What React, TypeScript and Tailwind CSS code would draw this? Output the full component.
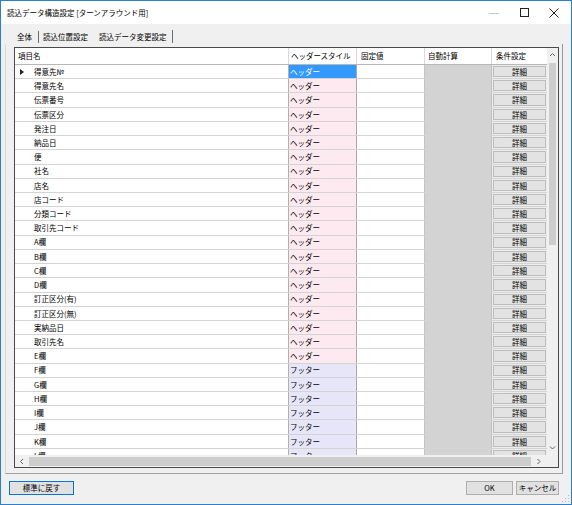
import React from "react";

const ROWS = [
  "得意先№",
  "得意先名",
  "伝票番号",
  "伝票区分",
  "発注日",
  "納品日",
  "便",
  "社名",
  "店名",
  "店コード",
  "分類コード",
  "取引先コード",
  "A欄",
  "B欄",
  "C欄",
  "D欄",
  "訂正区分(有)",
  "訂正区分(無)",
  "実納品日",
  "取引先名",
  "E欄",
  "F欄",
  "G欄",
  "H欄",
  "I欄",
  "J欄",
  "K欄",
  "L欄",
];

// rows from F欄 onwards are footer rows
const FOOTER_FROM = 21;

function Chevron({ dir }: { dir: "up" | "down" | "left" | "right" }) {
  const d = {
    up: "M1 4 L3.5 1.5 L6 4",
    down: "M1 1.5 L3.5 4 L6 1.5",
    left: "M4 1 L1.5 3.5 L4 6",
    right: "M1.5 1 L4 3.5 L1.5 6",
  }[dir];
  const w = dir === "up" || dir === "down" ? 7 : 5.5;
  const h = dir === "up" || dir === "down" ? 5.5 : 7;
  return (
    <svg width={w} height={h} viewBox={`0 0 ${w} ${h}`} className="block">
      <path d={d} fill="none" stroke="#606060" strokeWidth="1" />
    </svg>
  );
}

function TitleBar() {
  return (
    <div className="h-[23px] bg-white flex items-center shrink-0">
      <span className="pl-[6px] text-black">読込データ構造設定 [ターンアラウンド用]</span>
      <div className="ml-auto flex h-full pr-[2px]">
        <div className="w-[30px] h-full flex items-center justify-center">
          <div className="w-[10px] h-px bg-[#c8c8c8] mt-[1px]" />
        </div>
        <div className="w-[30px] h-full flex items-center justify-center">
          <div className="w-[9px] h-[9px] border border-[#222]" />
        </div>
        <div className="w-[30px] h-full flex items-center justify-center">
          <svg width="10" height="10" viewBox="0 0 10 10">
            <path d="M0.5 0.5 L9.5 9.5 M9.5 0.5 L0.5 9.5" stroke="#222" strokeWidth="1" />
          </svg>
        </div>
      </div>
    </div>
  );
}

function Tabs() {
  return (
    <div className="h-[20px] flex items-center pt-[5px] shrink-0">
      <div className="w-[37px] pl-[16px]">全体</div>
      <div className="w-px h-[12px] bg-[#6e6e6e]" />
      <div className="w-[60px] pl-[4px]">読込位置設定</div>
      <div className="w-[73px]">読込データ変更設定</div>
      <div className="w-px h-[13px] bg-[#6e6e6e]" />
    </div>
  );
}

function HeaderRow() {
  return (
    <div className="h-[17px] flex border-b border-[#b8b8b8] bg-white shrink-0">
      <div className="w-[274px] pl-[3px] flex items-center border-r border-[#d8d8d8]">項目名</div>
      <div className="w-[68px] pl-[2px] flex items-center border-r border-[#d8d8d8]">ヘッダースタイル</div>
      <div className="w-[68px] pl-[4px] flex items-center border-r border-[#d8d8d8]">固定値</div>
      <div className="w-[67px] pl-[3px] flex items-center border-r border-[#d8d8d8]">自動計算</div>
      <div className="w-[55px] pl-[4px] flex items-center">条件設定</div>
    </div>
  );
}

function DataRow({ name, index }: { name: string; index: number }) {
  const footer = index >= FOOTER_FROM;
  const selected = index === 0;
  const styleBg = selected
    ? "bg-[#3399ff] text-white"
    : footer
      ? "bg-[#e6e6f8]"
      : "bg-[#fdeaf0]";
  return (
    <div className="h-[14.23px] flex border-b border-[#d4d4d4] shrink-0">
      <div className="w-[274px] flex items-center border-r border-[#b0b0b0] bg-white">
        <div className="w-[19px] pl-[5px] flex items-center">
          {selected && (
            <svg width="4" height="6" viewBox="0 0 4 6">
              <path d="M0 0 L4 3 L0 6 Z" fill="#222" />
            </svg>
          )}
        </div>
        <span>{name}</span>
      </div>
      <div className={`w-[68px] pl-[1px] flex items-center border-r border-[#a8a8a8] ${styleBg}`}>
        {footer ? "フッター" : "ヘッダー"}
      </div>
      <div className="w-[68px] border-r border-[#c4c4c4] bg-white" />
      <div className="w-[67px] border-r border-[#c0c0c0] bg-[#d3d3d3]" />
      <div className="w-[55px] bg-[#ececec] p-[1px]">
        <div className="h-full border border-[#bdbdbd] bg-[#e3e3e3] flex items-center justify-center">
          詳細
        </div>
      </div>
    </div>
  );
}

function DataGrid() {
  return (
    <div className="w-[545px] h-[421px] border border-[#4a4a4a] flex flex-col bg-white">
      <div className="flex h-[407px]">
        <div className="w-[532px] flex flex-col overflow-hidden">
          <HeaderRow />
          <div className="flex-1 flex flex-col overflow-hidden">
            {ROWS.map((n, i) => (
              <DataRow key={n} name={n} index={i} />
            ))}
          </div>
        </div>
        <div className="w-[11px] bg-[#f0f0f0] flex flex-col">
          <div className="h-[14px] flex items-center justify-center">
            <Chevron dir="up" />
          </div>
          <div className="mt-[1px] ml-[2px] w-[7px] h-[182px] bg-[#cdcdcd]" />
          <div className="flex-1" />
          <div className="h-[14px] flex items-center justify-center">
            <Chevron dir="down" />
          </div>
        </div>
      </div>
      <div className="flex h-[12px] bg-[#f0f0f0]">
        <div className="w-[532px] flex items-center">
          <div className="w-[13px] flex items-center justify-center">
            <Chevron dir="left" />
          </div>
          <div className="ml-[1px] w-[502px] h-[9px] bg-[#cdcdcd]" />
          <div className="flex-1 flex items-center justify-center">
            <Chevron dir="right" />
          </div>
        </div>
        <div className="w-[11px] bg-[#f0f0f0]" />
      </div>
    </div>
  );
}

export default function App() {
  return (
    <div className="w-[572px] h-[505px] border border-[#2a7fcf] bg-[#f0f0f0] flex flex-col font-['Noto_Sans_CJK_JP',sans-serif] text-[7.5px] leading-none text-black relative">
      <TitleBar />
      <Tabs />
      <div className="ml-[4px] w-[558px] h-[430px] border-l border-[#d9d9d9] border-r border-r-[#9a9a9a] border-b border-b-[#a0a0a0] pt-[3px] pl-[8px] shrink-0">
        <DataGrid />
      </div>
      <div className="flex mt-[7px] px-[8px]">
        <button className="w-[65px] h-[14px] border border-[#0078d7] bg-[#e1e1e1] flex items-center justify-center">
          標準に戻す
        </button>
        <button className="ml-auto w-[47px] h-[14px] border border-[#adadad] bg-[#e1e1e1] flex items-center justify-center">
          OK
        </button>
        <button className="ml-[3px] mr-[4px] w-[43px] h-[14px] border border-[#adadad] bg-[#e1e1e1] flex items-center justify-center">
          キャンセル
        </button>
      </div>
      <svg width="8" height="8" viewBox="0 0 8 8" className="absolute right-[1px] bottom-[1px]">
        <rect x="6" y="0" width="1" height="1" fill="#b8b8b8" />
        <rect x="3" y="3" width="1" height="1" fill="#b8b8b8" />
        <rect x="6" y="3" width="1" height="1" fill="#b8b8b8" />
        <rect x="0" y="6" width="1" height="1" fill="#b8b8b8" />
        <rect x="3" y="6" width="1" height="1" fill="#b8b8b8" />
        <rect x="6" y="6" width="1" height="1" fill="#b8b8b8" />
      </svg>
    </div>
  );
}
